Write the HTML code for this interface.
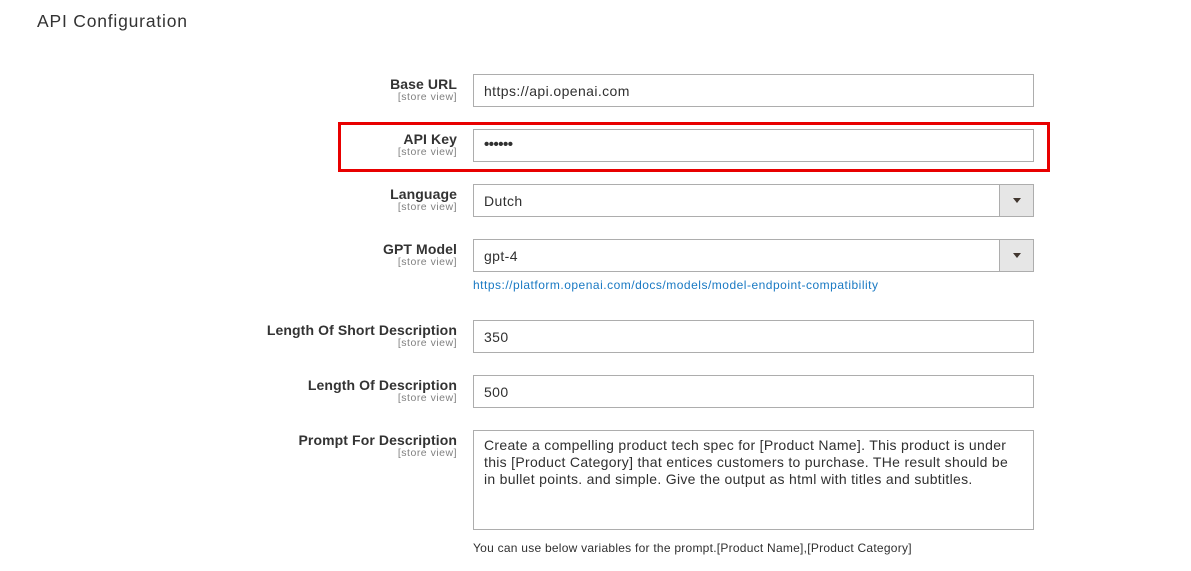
<!DOCTYPE html>
<html><head><meta charset="utf-8"><style>
*{box-sizing:border-box;margin:0;padding:0}
body{width:1191px;height:571px;background:#fff;font-family:"Liberation Sans",sans-serif;color:#333;position:relative;overflow:hidden}
.t{position:absolute;left:37px;top:11px;font-size:17.5px;color:#333;letter-spacing:.8px}
.lab{position:absolute;right:734px;text-align:right;font-size:14px;color:#333;font-weight:bold;letter-spacing:.1px;white-space:nowrap}
.lab small{display:block;font-size:10.5px;color:#808080;font-weight:normal;margin-top:-1px;letter-spacing:.5px}
.in{position:absolute;left:473px;width:561px;height:33px;border:1px solid #adadad;background:#fff;font-size:14px;padding:8px 10px;color:#303030;white-space:nowrap;letter-spacing:.4px}
.arr{position:absolute;right:0;top:0;width:34px;height:31px;background:#e6e6e6;border-left:1px solid #adadad}
.arr:after{content:"";position:absolute;left:13px;top:13px;border-left:4px solid transparent;border-right:4px solid transparent;border-top:5px solid #41362f}
.red{position:absolute;left:338px;top:122px;width:712px;height:50px;border:3.5px solid #e80000}
.link{position:absolute;left:473px;top:278px;font-size:12px;color:#1979c3;letter-spacing:.5px}
.note{position:absolute;left:473px;top:541px;font-size:12px;color:#303030;letter-spacing:.25px}
.ta{height:100px;padding:6px 10px;line-height:17px;font-size:14px;letter-spacing:.3px;white-space:nowrap}
</style></head><body>
<div class="t">API Configuration</div>

<div class="lab" style="top:76px">Base URL<small>[store view]</small></div>
<div class="in" style="top:74px">https://api.openai.com</div>

<div class="red"></div>
<div class="lab" style="top:131px">API Key<small>[store view]</small></div>
<div class="in" style="top:129px;font-size:15px;font-weight:bold;letter-spacing:-.5px;padding-top:6px">••••••</div>

<div class="lab" style="top:186px">Language<small>[store view]</small></div>
<div class="in" style="top:184px">Dutch<div class="arr"></div></div>

<div class="lab" style="top:241px">GPT Model<small>[store view]</small></div>
<div class="in" style="top:239px">gpt-4<div class="arr"></div></div>
<div class="link">https://platform.openai.com/docs/models/model-endpoint-compatibility</div>

<div class="lab" style="top:322px">Length Of Short Description<small>[store view]</small></div>
<div class="in" style="top:320px">350</div>

<div class="lab" style="top:377px">Length Of Description<small>[store view]</small></div>
<div class="in" style="top:375px">500</div>

<div class="lab" style="top:432px">Prompt For Description<small>[store view]</small></div>
<div class="in ta" style="top:430px">Create a compelling product tech spec for [Product Name]. This product is under<br>this [Product Category] that entices customers to purchase. THe result should be<br>in bullet points. and simple. Give the output as html with titles and subtitles.</div>
<div class="note">You can use below variables for the prompt.[Product Name],[Product Category]</div>
</body></html>
